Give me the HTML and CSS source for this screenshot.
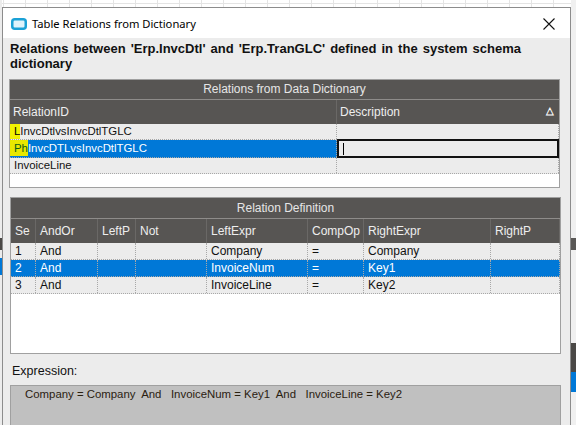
FILE: index.html
```html
<!DOCTYPE html>
<html>
<head>
<meta charset="utf-8">
<link rel="stylesheet" href="styles.css">
</head>
<body>
<div class="desktop">
  <div class="behind behind-right">
    <div class="bk bk-dark1"></div>
    <div class="bk bk-dark2"></div>
    <div class="bk bk-blue"></div>
  </div>
  <div class="behind behind-left">
    <div class="bk bk-ldark"></div>
    <div class="bk bk-lblue"></div>
  </div>
  <div class="window">
    <div class="titlebar">
      <svg class="appicon" width="16" height="12" viewBox="0 0 16 12"><rect x="1.25" y="1.25" width="13.5" height="9.5" rx="2.5" fill="#dff3fb" stroke="#1ba1d6" stroke-width="2.5"/></svg>
      <span class="title">Table Relations from Dictionary</span>
      <svg class="close" width="12" height="12" viewBox="0 0 12 12"><path d="M0.5 0.5 L11.5 11.5 M11.5 0.5 L0.5 11.5" stroke="#111" stroke-width="1.1" fill="none"/></svg>
    </div>
    <div class="content">
      <p class="heading">Relations between 'Erp.InvcDtl' and 'Erp.TranGLC' defined in the system schema dictionary</p>

      <div class="grid g1">
        <div class="band">Relations from Data Dictionary</div>
        <div class="cols">
          <div class="ch">RelationID</div>
          <div class="ch ch-last">Description<span class="sort">&#9651;</span></div>
        </div>
        <div class="row r1">
          <div class="c"><span class="hl hl1">L</span>InvcDtlvsInvcDtlTGLC</div>
          <div class="c"></div>
        </div>
        <div class="row sel">
          <div class="c"><span class="hl hl2">Ph</span>InvcDTLvsInvcDtlTGLC</div>
          <div class="c edit"><span class="caret"></span></div>
        </div>
        <div class="row r3">
          <div class="c">InvoiceLine</div>
          <div class="c"></div>
        </div>
        <div class="empty"></div>
      </div>

      <div class="grid g2">
        <div class="band">Relation Definition</div>
        <div class="cols">
          <div class="ch">Se</div>
          <div class="ch">AndOr</div>
          <div class="ch">LeftP</div>
          <div class="ch">Not</div>
          <div class="ch">LeftExpr</div>
          <div class="ch">CompOp</div>
          <div class="ch">RightExpr</div>
          <div class="ch">RightP</div>
        </div>
        <div class="row">
          <div class="c">1</div><div class="c">And</div><div class="c"></div><div class="c"></div><div class="c">Company</div><div class="c">=</div><div class="c">Company</div><div class="c"></div>
        </div>
        <div class="row sel">
          <div class="c">2</div><div class="c">And</div><div class="c"></div><div class="c"></div><div class="c">InvoiceNum</div><div class="c">=</div><div class="c">Key1</div><div class="c"></div>
        </div>
        <div class="row">
          <div class="c">3</div><div class="c">And</div><div class="c"></div><div class="c"></div><div class="c">InvoiceLine</div><div class="c">=</div><div class="c">Key2</div><div class="c"></div>
        </div>
        <div class="empty"></div>
      </div>

      <div class="exlabel">Expression:</div>
      <div class="exbox">Company = Company&nbsp; And &nbsp; InvoiceNum = Key1&nbsp; And &nbsp; InvoiceLine = Key2</div>
    </div>
  </div>
</div>
</body>
</html>
```
FILE: styles.css
```css
html, body {
  margin: 0;
  padding: 0;
}
body {
  width: 576px;
  height: 425px;
  overflow: hidden;
  background-color: #ffffff;
  background-image:
    linear-gradient(to right, #e4e4e4 1px, transparent 1px),
    linear-gradient(to bottom, #e4e4e4 1px, transparent 1px);
  background-size: 22px 22px;
  background-position: 3px 3px;
}
.desktop {
  position: relative;
  width: 576px;
  height: 425px;
  padding-top: 7px;
  padding-left: 2px;
  box-sizing: border-box;
}
.behind {
  position: absolute;
  top: 0;
  height: 425px;
}
.behind-right {
  left: 571px;
  width: 5px;
  background: #f0f0f0;
}
.behind-left {
  left: 0;
  width: 2px;
  background: #ececec;
}
.bk {
  position: absolute;
  left: 0;
  right: 0;
}
.bk-dark1 { top: 238px; height: 12px; background: #5a5856; }
.bk-dark2 { top: 343px; height: 29px; background: #4a4846; }
.bk-blue { top: 372px; height: 20px; background: #0078d7; }
.bk-ldark { top: 238px; height: 12px; background: #4a4846; }
.bk-lblue { top: 258px; height: 17px; background: #0078d7; }

.window {
  position: relative;
  width: 569px;
  height: 420px;
  box-sizing: border-box;
  border: 1px solid #8c8c8c;
  border-bottom: none;
  background: #ececec;
  font-family: "Liberation Sans", Arial, sans-serif;
  color: #000;
}
.titlebar {
  height: 30px;
  background: #ffffff;
  display: flex;
  align-items: center;
  padding-left: 8px;
  padding-right: 15px;
}
.appicon {
  margin-right: 5px;
  margin-top: 1px;
}
.title {
  flex: 1;
  font-family: "Noto Sans", "Open Sans", sans-serif;
  font-size: 11.2px;
  color: #000;
  margin-top: 1px;
}
.close {
  margin-top: 1px;
}
.content {
  padding: 3px 0 0 6px;
}
.heading {
  margin: 0;
  width: 511px;
  padding-left: 1px;
  font-size: 13px;
  font-weight: bold;
  line-height: 15px;
  text-align: justify;
  color: #111;
}
.grid {
  border: 1px solid #a0a0a0;
  background: #ffffff;
  box-sizing: border-box;
  font-size: 12px;
}
.g1 {
  margin-top: 8px;
  margin-left: 0;
  width: 551px;
}
.g2 {
  margin-top: 9px;
  margin-left: 1px;
  width: 551px;
}
.band {
  height: 19px;
  background: #575553;
  color: #e6e6e6;
  text-align: center;
  line-height: 19px;
  font-size: 12px;
  border-bottom: 1px solid #8e8c8a;
}
.g2 .band {
  height: 20px;
  line-height: 20px;
}
.cols, .row {
  display: grid;
}
.g1 .cols, .g1 .row {
  grid-template-columns: 327px 1fr;
}
.g2 .cols, .g2 .row {
  grid-template-columns: 25px 62px 38px 71px 101px 56px 127px 1fr;
}
.cols {
  height: 24px;
  background: #575553;
  color: #eeeeee;
}
.ch {
  position: relative;
  padding-left: 3px;
  line-height: 24px;
  border-right: 1px solid #6a6866;
  font-size: 12px;
  white-space: nowrap;
  overflow: hidden;
}
.g2 .ch {
  padding-left: 4px;
}
.ch-last {
  border-right: none;
}
.sort {
  position: absolute;
  right: 5px;
  top: -1px;
  font-size: 10px;
  color: #fff;
  font-weight: bold;
}
.row {
  height: 17px;
  background: #ececec;
  border-bottom: 1px dotted #a8a8a8;
  box-sizing: border-box;
}
.c {
  border-right: 1px dotted #a8a8a8;
  padding-left: 4px;
  line-height: 16px;
  white-space: nowrap;
  overflow: hidden;
  color: #111;
}
.g1 .c {
  padding-left: 4px;
  font-size: 11.4px;
}
.g1 .r1, .g1 .r3 {
  height: 16px;
}
.g1 .r1 .c, .g1 .r3 .c {
  line-height: 15px;
}
.row.sel {
  background: #0078d7;
}
.row.sel .c {
  color: #ffffff;
}
.g1 .row.sel {
  height: 18px;
}
.c.edit {
  background: #ececec;
  border: 2px solid #111;
  position: relative;
  margin: -1px 0 -1px 0;
}
.caret {
  position: absolute;
  left: 4px;
  top: 2px;
  width: 1px;
  height: 12px;
  background: #000;
}
.hl {
  display: inline-block;
  background: #f2f200;
  color: #000;
  margin-left: -4px;
  padding-left: 4px;
}
.row.sel .hl2 {
  color: #0c5c18;
  background: #e8e800;
}
.g1 .empty {
  height: 13px;
}
.g2 .empty {
  height: 59px;
}
.exlabel {
  margin-top: 10px;
  padding-left: 3px;
  font-size: 12.5px;
  line-height: 15px;
  color: #111;
}
.exbox {
  margin-top: 6px;
  margin-left: 1px;
  width: 551px;
  height: 50px;
  box-sizing: border-box;
  background: #c0c0c0;
  border: 1px solid #a0a0a0;
  padding: 1px 0 0 14px;
  font-size: 11.4px;
  line-height: 14px;
  color: #2a2010;
  white-space: nowrap;
}
```
